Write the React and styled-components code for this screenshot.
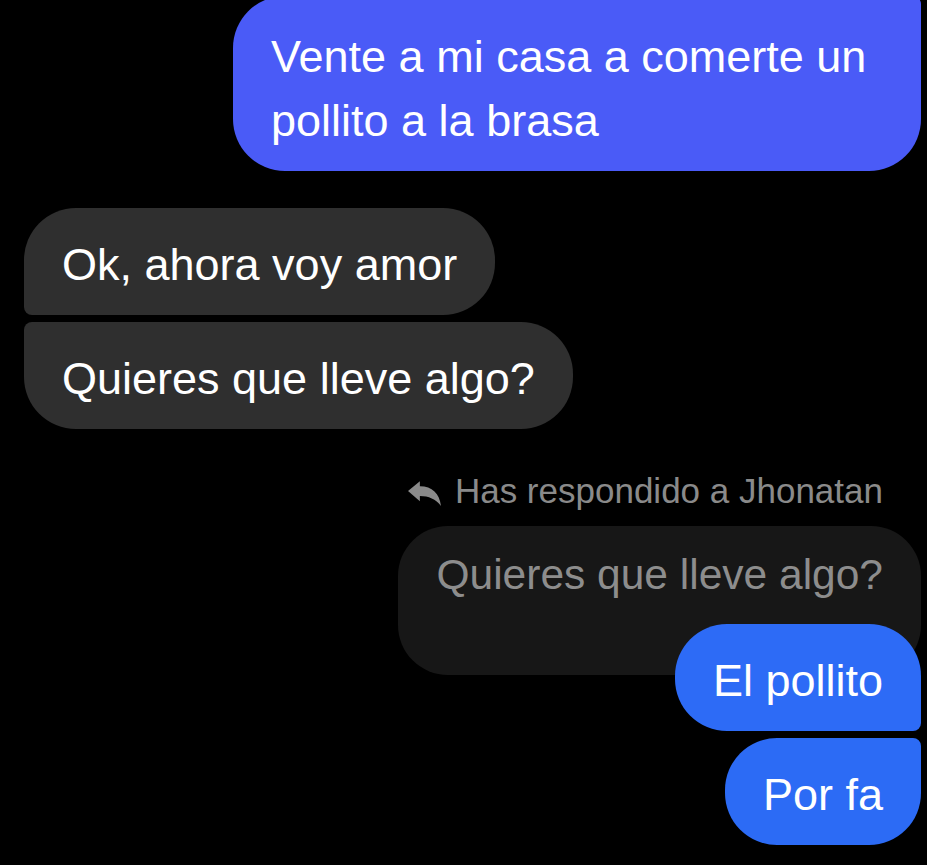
import React from 'react';
import styled, { createGlobalStyle } from 'styled-components';

const GlobalStyle = createGlobalStyle`
  html, body {
    margin: 0;
    padding: 0;
    background: #000;
    overflow: hidden;
  }
  body {
    font-family: "Liberation Sans", Arial, sans-serif;
  }
`;

const Thread = styled.div`
  width: 927px;
  height: 865px;
  box-sizing: border-box;
  padding: 0 6px 0 24px;
  display: flex;
  flex-direction: column;
  background: #000;
  overflow: hidden;
`;

const Row = styled.div`
  display: flex;
  justify-content: ${(p) => (p.$mine ? 'flex-end' : 'flex-start')};
  margin-top: ${(p) => p.$gap || 0}px;
  position: relative;
  z-index: ${(p) => p.$z || 0};
`;

const big = '52px';
const small = '8px';

const Bubble = styled.div`
  box-sizing: border-box;
  max-width: 688px;
  padding: 25px 38px 18px;
  font-size: 45px;
  line-height: 64px;
  color: #fff;
  background: ${(p) => p.$bg || '#2f2f2f'};
  border-radius: ${(p) => p.$radius || big};
`;

const TopBubble = styled(Bubble)`
  padding-top: 29px;
  padding-bottom: 18px;
  margin-top: -4px;
`;

const ReplyLabel = styled.div`
  display: flex;
  align-items: center;
  justify-content: flex-end;
  gap: 14px;
  padding-right: 38px;
  height: 40px;
  font-size: 35px;
  line-height: 40px;
  color: #8a8a8a;
`;

const ReplyIcon = styled.svg`
  width: 33px;
  height: 25px;
  fill: #8a8a8a;
  margin-top: 4px;
`;

const Quote = styled.div`
  box-sizing: border-box;
  padding: 17px 38px 68px;
  font-size: 42.5px;
  line-height: 64px;
  color: #8d8d8d;
  background: #171717;
  border-radius: 50px;
`;

export default function App() {
  return (
    <>
      <GlobalStyle />
      <Thread>
        <Row $mine>
          <TopBubble $bg="#4a5bf7" $radius={`${big} ${small} ${big} ${big}`}>
            Vente a mi casa a comerte un pollito a la brasa
          </TopBubble>
        </Row>

        <Row $gap={37}>
          <Bubble $radius={`${big} ${big} ${big} ${small}`}>Ok, ahora voy amor</Bubble>
        </Row>
        <Row $gap={7}>
          <Bubble $radius={`${small} ${big} ${big} ${big}`}>Quieres que lleve algo?</Bubble>
        </Row>

        <Row $mine $gap={42}>
          <ReplyLabel>
            <ReplyIcon viewBox="0 0 32 24">
              <path d="M0 9.5 L11.5 0 V5 C23.5 5 30.5 12 32 24 C27 17.5 20 14.5 11.5 14.5 V19.5 Z" />
            </ReplyIcon>
            Has respondido a Jhonatan
          </ReplyLabel>
        </Row>
        <Row $mine $gap={15}>
          <Quote>Quieres que lleve algo?</Quote>
        </Row>
        <Row $mine $gap={-51} $z={1}>
          <Bubble $bg="#2d6bf6" $radius={`${big} ${big} ${small} ${big}`}>El pollito</Bubble>
        </Row>
        <Row $mine $gap={7}>
          <Bubble $bg="#2c6bf5" $radius={`${big} ${small} ${big} ${big}`}>Por fa</Bubble>
        </Row>
      </Thread>
    </>
  );
}
